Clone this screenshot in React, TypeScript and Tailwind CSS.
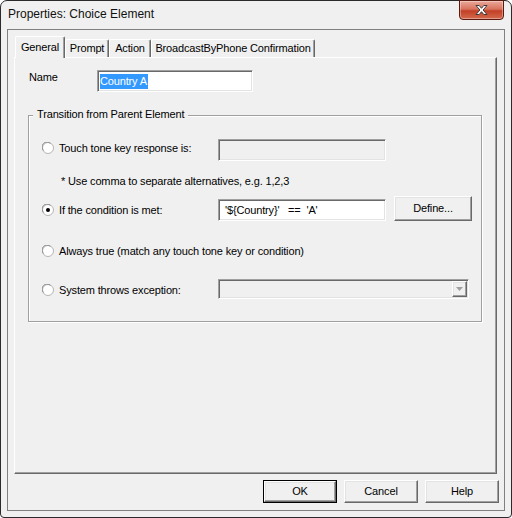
import React from "react";

const sunken = "border border-t-[#a0a0a0] border-l-[#a0a0a0] border-b-white border-r-white shadow-[inset_1px_1px_0_#696969,inset_-1px_-1px_0_#e3e3e3]";
const raised = "border border-t-white border-l-white border-b-[#696969] border-r-[#696969] shadow-[inset_-1px_-1px_0_#a0a0a0,inset_1px_1px_0_#e3e3e3] bg-[#f0f0f0]";

const Radio = ({checked}:{checked?:boolean}) => (
  <svg width="12" height="12" viewBox="0 0 12 12" className="shrink-0">
    <circle cx="6" cy="6" r="5.5" fill="#fff" stroke="#b4b4b4"/>
    <path d="M1.5 8.5A4.6 4.6 0 0 1 8.5 1.5" fill="none" stroke="#8c8c8c" strokeWidth="1"/>
    {checked && <circle cx="6" cy="6" r="2" fill="#000"/>}
  </svg>
);

const Tab = ({label, active, w}:{label:string; active?:boolean; w:string}) => (
  <div className={`${w} flex justify-center border-l border-t border-l-white border-t-white border-r border-r-[#696969] shadow-[inset_-1px_0_0_#a0a0a0] bg-[#f0f0f0] rounded-tl-[2px] rounded-tr-[2px] ${active ? "h-[22px] -mb-px relative z-10 pt-[4px]" : "h-[18px] pt-[2px]"}`}>
    <span className="leading-[13px]">{label}</span>
  </div>
);

const Btn = ({label, w, h, def}:{label:string; w:string; h:string; def?:boolean}) => (
  <div className={`${w} ${h} ${def ? "border border-black" : ""}`}>
    <div className={`${raised} w-full h-full flex items-center justify-center leading-[13px]`}>{label}</div>
  </div>
);

export default function App(){
  return (
    <div className="w-[512px] h-[518px] bg-white font-['Liberation_Sans',Arial,sans-serif] text-[11px] tracking-[-0.15px] text-black">
      <div className="w-full h-full flex flex-col border border-[#2b2b2b] rounded-t-[7px] rounded-b-[4px] bg-[#f0f0f0] px-[6px] pb-[6px]">
        {/* title bar */}
        <div className="h-[28px] -mx-[6px] flex items-start">
          <div className="flex-1 pl-[7px] pt-[6px] text-[12px] tracking-normal leading-[15px] text-[#111]">Properties: Choice Element</div>
          <div className="mr-[7px] -mt-px w-[45px] h-[20px] rounded-b-[4px] border border-[#5a1a10] bg-[linear-gradient(#eaa89a,#d8735e_45%,#c23f26_55%,#d46a4e)] shadow-[inset_0_0_0_1px_rgba(255,255,255,.35)] flex items-center justify-center">
            <svg width="17" height="12" viewBox="0 0 17 12">
              <path d="M3 1.5h3.2l2.3 2.8 2.3-2.8H14l-3.9 4.5L14 10.5h-3.2L8.5 7.7 6.2 10.5H3l3.9-4.5z" fill="#fff" stroke="#3b3b3b" strokeWidth="1" strokeLinejoin="round"/>
            </svg>
          </div>
        </div>
        {/* client area */}
        <div className="flex-1 flex flex-col border border-[#808080] pl-[6px] pr-[5px] pt-0">
          <div className="h-[27px] flex items-end pl-[1px]">
            <Tab label="General" active w="w-[50px]"/>
            <Tab label="Prompt" w="w-[44px]"/>
            <Tab label="Action" w="w-[42px]"/>
            <Tab label="BroadcastByPhone Confirmation" w="w-[164px]"/>
          </div>
          <div className="w-[483px] h-[417px] border border-t-white border-l-white border-b-[#696969] border-r-[#696969] shadow-[inset_-1px_-1px_0_#a0a0a0] flex flex-col">
            <div className="flex items-start mt-[12px] pl-[14px]">
              <div className="w-[68px] pt-[1px] leading-[13px]">Name</div>
              <div className={`${sunken} w-[156px] h-[22px] bg-white pl-[2px] pt-[2px]`}>
                <span className="inline-block bg-[#3399ff] text-white leading-[15px] h-[15px] pr-[1px]">Country A</span>
              </div>
            </div>
            <div className="ml-[13px] mt-[23px] w-[454px] h-[207px] border border-[#a0a0a0] shadow-[1px_1px_0_#fff,inset_1px_1px_0_#fff] flex flex-col">
              <div className="-mt-[8px] ml-[4px] w-fit px-[4px] bg-[#f0f0f0] leading-[13px]">Transition from Parent Element</div>
              <div className="mt-[18px] pl-[13px] flex items-start">
                <div className="w-[176px] h-[18px] flex items-center gap-[5px]"><Radio/><span className="leading-[13px]">Touch tone key response is:</span></div>
                <div className={`${sunken} w-[168px] h-[22px] bg-[#f0f0f0]`}/>
              </div>
              <div className="mt-[14px] pl-[32px] leading-[13px]">* Use comma to separate alternatives, e.g. 1,2,3</div>
              <div className="mt-[8px] pl-[13px] flex items-start">
                <div className="mt-[3px] w-[176px] h-[22px] flex items-center gap-[5px]"><Radio checked/><span className="leading-[13px]">If the condition is met:</span></div>
                <div className={`${sunken} mt-[3px] w-[168px] h-[22px] bg-white flex items-center pl-[6px] whitespace-pre leading-[13px]`}>{"'${Country}'   ==  'A'"}</div>
                <div className="ml-[8px]"><Btn label="Define..." w="w-[78px]" h="h-[25px]"/></div>
              </div>
              <div className="mt-[21px] pl-[13px] h-[18px] flex items-center gap-[5px]"><Radio/><span className="leading-[13px]">Always true (match any touch tone key or condition)</span></div>
              <div className="mt-[19px] pl-[13px] flex items-start">
                <div className="w-[176px] h-[22px] flex items-center gap-[5px]"><Radio/><span className="leading-[13px]">System throws exception:</span></div>
                <div className={`${sunken} w-[251px] h-[20px] bg-[#f0f0f0] flex justify-end items-start pt-[1px] pr-[1px]`}>
                  <div className={`${raised} w-[15px] h-[16px] flex items-center justify-center`}>
                    <svg width="7" height="4" viewBox="0 0 7 4"><path d="M0 0h7L3.5 4z" fill="#a0a0a0"/></svg>
                  </div>
                </div>
              </div>
            </div>
          </div>
          <div className="mt-[6px] flex justify-end gap-[7px]">
            <Btn label="OK" w="w-[74px]" h="h-[23px]" def/>
            <Btn label="Cancel" w="w-[74px]" h="h-[23px]"/>
            <Btn label="Help" w="w-[74px]" h="h-[23px]"/>
          </div>
        </div>
      </div>
    </div>
  );
}
